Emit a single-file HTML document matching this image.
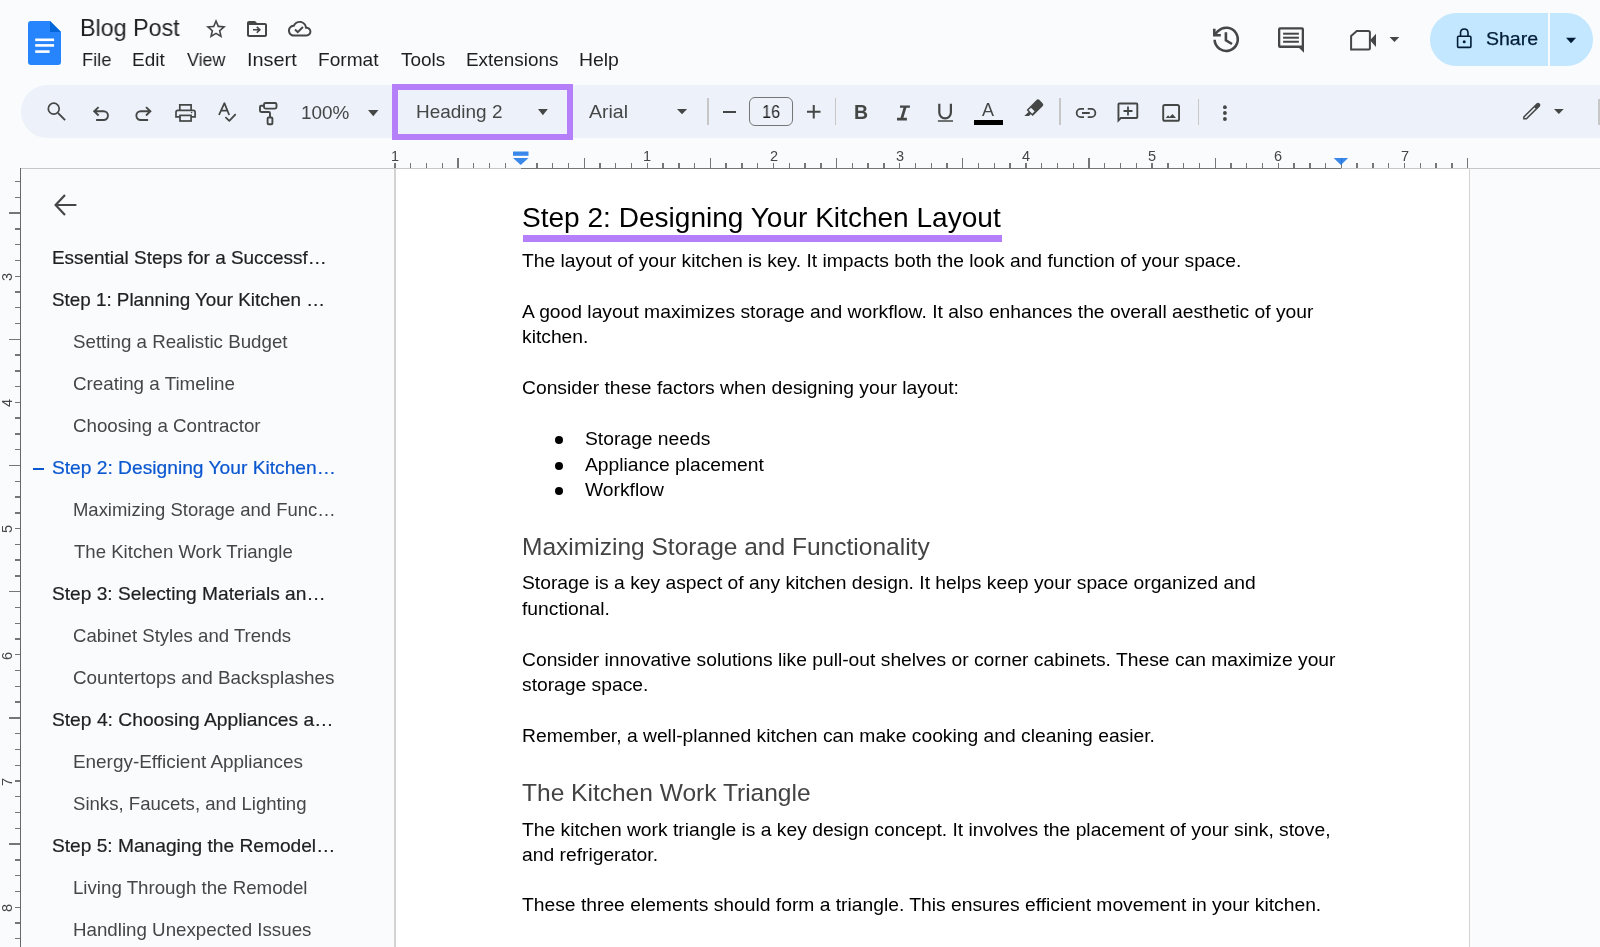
<!DOCTYPE html>
<html><head><meta charset="utf-8"><title>Blog Post - Google Docs</title>
<style>
html,body{margin:0;padding:0;}
body{width:1600px;height:947px;overflow:hidden;position:relative;background:#f9fbfd;font-family:"Liberation Sans",sans-serif;}
.t{position:absolute;white-space:nowrap;line-height:1;transform-origin:0 0;will-change:transform;}
.a{position:absolute;}
svg{position:absolute;overflow:visible;}
</style></head><body>

<svg style="left:28px;top:21px" width="33" height="44" viewBox="0 0 33 44">
<path d="M3 0H22L33 11V41Q33 44 30 44H3Q0 44 0 41V3Q0 0 3 0Z" fill="#2684fc"/>
<path d="M22 0L33 11H22Z" fill="#0066da"/>
<rect x="7.2" y="17.5" width="18.9" height="2.6" fill="#fff"/>
<rect x="7.2" y="23.1" width="18.9" height="2.6" fill="#fff"/>
<rect x="7.2" y="29.3" width="14.4" height="2.6" fill="#fff"/>
</svg>
<div class="t" style="left:79.76px;top:17.24px;font-size:23.70px;color:#1f1f1f;transform:scaleX(0.9827);transform-origin:2.20px 0;">Blog Post</div>
<svg style="left:203.5px;top:17px" width="24" height="24" viewBox="0 0 24 24"><path fill="#444746" d="M22 9.24l-7.19-.62L12 2 9.19 8.63 2 9.24l5.46 4.73L5.82 21 12 17.27 18.18 21l-1.63-7.03L22 9.24zM12 15.4l-3.76 2.27 1-4.28-3.32-2.88 4.38-.38L12 6.1l1.71 4.04 4.38.38-3.32 2.88 1 4.28L12 15.4z"/></svg>
<svg style="left:245.2px;top:17px" width="24" height="24" viewBox="0 0 24 24"><path fill="#444746" d="M20 6h-8l-2-2H4c-1.1 0-1.99.9-1.99 2L2 18c0 1.1.9 2 2 2h16c1.1 0 2-.9 2-2V8c0-1.1-.9-2-2-2zm0 12H4V8h16v10z"/><path fill="#444746" d="M12.84 12H8v1.6h4.84l-1.59 1.59L12.36 16.3 16 12.8 12.36 9.3l-1.11 1.11z"/></svg>
<svg style="left:288px;top:17.1px" width="23.4" height="23.4" viewBox="0 0 24 24"><path fill="#444746" d="M19.35 10.04C18.67 6.59 15.64 4 12 4 9.11 4 6.6 5.64 5.35 8.04 2.34 8.36 0 10.91 0 14c0 3.31 2.69 6 6 6h13c2.76 0 5-2.24 5-5 0-2.64-2.05-4.78-4.65-4.96zM19 18H6c-2.21 0-4-1.79-4-4 0-2.05 1.53-3.76 3.56-3.97l1.07-.11.5-.95C8.08 7.14 9.94 6 12 6c2.62 0 4.88 1.86 5.39 4.43l.3 1.5 1.53.11c1.56.1 2.78 1.41 2.78 2.96 0 1.65-1.35 3-3 3zm-9-3.82l-2.09-2.09L6.5 13.5 10 17l6.01-6.01-1.41-1.41z"/></svg>
<div class="t" style="left:82.10px;top:50.82px;font-size:18.40px;color:#1f1f1f;transform:scaleX(0.9893);transform-origin:0.70px 0;">File</div>
<div class="t" style="left:131.50px;top:50.82px;font-size:18.40px;color:#1f1f1f;transform:scaleX(1.0323);transform-origin:1.00px 0;">Edit</div>
<div class="t" style="left:186.50px;top:50.82px;font-size:18.40px;color:#1f1f1f;transform:scaleX(0.9688);transform-origin:0.50px 0;">View</div>
<div class="t" style="left:246.50px;top:50.82px;font-size:18.40px;color:#1f1f1f;transform:scaleX(1.0833);transform-origin:1.00px 0;">Insert</div>
<div class="t" style="left:318.00px;top:50.82px;font-size:18.40px;color:#1f1f1f;transform:scaleX(1.0395);transform-origin:0.75px 0;">Format</div>
<div class="t" style="left:401.00px;top:50.82px;font-size:18.40px;color:#1f1f1f;transform:scaleX(1.0298);transform-origin:0.25px 0;">Tools</div>
<div class="t" style="left:465.50px;top:50.82px;font-size:18.40px;color:#1f1f1f;transform:scaleX(1.0284);transform-origin:1.50px 0;">Extensions</div>
<div class="t" style="left:578.50px;top:50.82px;font-size:18.40px;color:#1f1f1f;transform:scaleX(1.0556);transform-origin:1.50px 0;">Help</div>
<svg style="left:1205px;top:20px" width="40" height="40" viewBox="0 0 40 40" fill="none" stroke="#444746" stroke-width="2.6">
<path d="M9.6 19.8A11.6 11.6 0 1 0 13 11.1"/><path d="M13.4 10.7L9.9 14.3"/><path d="M9.3 8.8V15.2H15.8"/><path d="M20.9 12.2V20.3L27 24"/></svg>
<svg style="left:1270px;top:20px" width="40" height="40" viewBox="0 0 40 40">
<path fill="#444746" fill-rule="evenodd" d="M8 9.2Q8 7.2 10 7.2H32Q34 7.2 34 9.2V32.8L29.1 27.9H10Q8 27.9 8 25.9ZM10.3 9.5V25.6H31.7V9.5Z"/>
<rect x="13.1" y="12.7" width="15.8" height="2" fill="#444746"/><rect x="13.1" y="16.7" width="15.8" height="2" fill="#444746"/><rect x="13.1" y="20.75" width="15.8" height="2" fill="#444746"/></svg>
<svg style="left:1345px;top:20px" width="60" height="40" viewBox="0 0 60 40">
<path d="M6.1 16L11.8 10.9H23.4Q24.9 10.9 24.9 12.4V28.1Q24.9 29.6 23.4 29.6H6.1Z" fill="none" stroke="#444746" stroke-width="2"/>
<path d="M25 20.3L31 13.8V27Z" fill="#444746"/>
<path d="M44.6 16.9H54.3L49.45 22Z" fill="#444746"/></svg>
<div class="a" style="left:1430px;top:13px;width:163px;height:52.5px;border-radius:26.25px;background:#c2e7ff"></div>
<div class="a" style="left:1548.4px;top:13px;width:1.5px;height:52.5px;background:#f9fbfd"></div>
<svg style="left:1450px;top:24px" width="30" height="28" viewBox="0 0 30 28" fill="none" stroke="#001d35" stroke-width="1.6"><path d="M10.55 12.2V8.6A3.73 3.73 0 0 1 18 8.6V12.2"/><rect x="7.6" y="12.2" width="13.3" height="11.2" rx="1"/><circle cx="14.2" cy="17.7" r="1.5" fill="#001d35" stroke="none"/></svg>
<div class="t" style="left:1486.30px;top:30.42px;font-size:18.40px;color:#001d35;transform:scaleX(1.0617);transform-origin:1.00px 0;-webkit-text-stroke:0.25px #001d35;">Share</div>
<svg style="left:1560px;top:30px" width="20" height="20" viewBox="0 0 20 20"><path d="M6 7.8H16.1L11.05 13.2Z" fill="#001d35"/></svg>
<div class="a" style="left:21px;top:85.3px;width:1650px;height:52.4px;border-radius:26.2px;background:#edf2fa"></div>
<svg style="left:42px;top:98px" width="32" height="28" viewBox="0 0 32 28" fill="none" stroke="#444746" stroke-width="1.7"><circle cx="11.75" cy="10.65" r="5.45"/><path d="M15.9 14.8L23.1 22.2" stroke-width="1.9"/></svg>
<svg style="left:88px;top:100px" width="68" height="26" viewBox="0 0 68 26" fill="none" stroke="#444746" stroke-width="1.9"><path d="M10.6 7.1L6.2 11.3L10.6 15.5M6.6 11.2H15.55A4.4 4.4 0 0 1 15.55 20H8.1"/><path d="M58 7.1L62.4 11.3L58 15.5M62 11.2H52.75A4.4 4.4 0 0 0 52.75 20H60.1"/></svg>
<svg style="left:170px;top:98px" width="32" height="28" viewBox="0 0 32 28" fill="none" stroke="#444746" stroke-width="1.7"><path d="M9.8 12.4V6.9H21.1V12.4"/><path d="M10 18.9H6V14.1Q6 12.3 7.8 12.3H23.3Q25.1 12.3 25.1 14.1V18.9H21.1"/><rect x="10" y="17.4" width="11.1" height="5.6"/><circle cx="21.6" cy="14.5" r="0.8" fill="#444746" stroke="none"/></svg>
<svg style="left:210px;top:95px" width="32" height="32" viewBox="0 0 32 32" fill="none" stroke="#444746" stroke-width="1.8" stroke-linejoin="round"><path d="M9 20L14.4 8.2L19.2 20M11.3 15.6H17.2"/><path d="M15.4 22.2L19.3 25.8L25.7 19.2"/></svg>
<svg style="left:210px;top:95px" width="72" height="32" viewBox="0 0 72 32" fill="none" stroke="#444746" stroke-width="1.9"><rect x="54" y="8" width="12.5" height="5.6" rx="1.5"/><path d="M54 10.8H51.2Q50 10.8 50 12V15.8Q50 17 51.2 17H58.8Q60 17 60 18.2V22.5"/><rect x="57.6" y="22.5" width="4.8" height="6.8" rx="1"/></svg>
<div class="t" style="left:301.25px;top:104.12px;font-size:18.40px;color:#444746;transform:scaleX(1.0272);transform-origin:1.50px 0;">100%</div>
<svg style="left:368px;top:110px" width="10.5" height="6.2" viewBox="0 0 10.5 6.2"><path d="M0 0H10.5L5.25 6.2Z" fill="#444746"/></svg>
<div class="t" style="left:416.30px;top:102.92px;font-size:18.40px;color:#444746;transform:scaleX(1.0317);transform-origin:1.50px 0;">Heading 2</div>
<svg style="left:538.2px;top:108.7px" width="9.8" height="6.2" viewBox="0 0 9.8 6.2"><path d="M0 0H9.8L4.9 6.2Z" fill="#444746"/></svg>
<div class="a" style="left:391.7px;top:83.5px;width:168.9px;height:44.8px;border:6px solid #b57ffa"></div>
<div class="t" style="left:589.30px;top:103.02px;font-size:18.40px;color:#444746;transform:scaleX(1.0611);transform-origin:0.50px 0;">Arial</div>
<svg style="left:677.2px;top:109.2px" width="10.1" height="5.2" viewBox="0 0 10.1 5.2"><path d="M0 0H10.1L5.05 5.2Z" fill="#444746"/></svg>
<div class="a" style="left:707.1px;top:98.1px;width:1.7px;height:26.7px;background:#c7c7c7"></div>
<div class="a" style="left:722.8px;top:110.8px;width:13.6px;height:2px;background:#444746"></div>
<div class="a" style="left:749.4px;top:96.5px;width:41.6px;height:27.3px;border:1.4px solid #747775;border-radius:6px"></div>
<div class="t" style="left:762.40px;top:103.42px;font-size:18.40px;color:#1f1f1f;transform:scaleX(0.8737);transform-origin:1.00px 0;">16</div>
<svg style="left:806.8px;top:105.4px" width="13.5" height="13.5" viewBox="0 0 13.5 13.5"><path d="M0 6.75H13.5M6.75 0V13.5" stroke="#444746" stroke-width="2"/></svg>
<div class="a" style="left:834.8px;top:98.1px;width:1.4px;height:26.7px;background:#c7c7c7"></div>
<div class="t" style="left:854px;top:103.2px;font-size:19.5px;font-weight:bold;color:#444746">B</div>
<svg style="left:890px;top:100px" width="25" height="25" viewBox="0 0 25 25" fill="#444746">
<path d="M10 5.4H19.9V7.8H16.4L13.4 17.8H16.9V20.5H7V17.8H10.5L13.5 7.8H10Z"/></svg>
<svg style="left:930px;top:100px" width="30" height="25" viewBox="0 0 30 25" fill="none" stroke="#444746" stroke-width="2.2">
<path d="M9.3 3.8V12.6A5.8 5.8 0 0 0 20.9 12.6V3.8"/><path d="M7.9 21H23" stroke-width="1.5"/></svg>
<div class="t" style="left:982px;top:101px;font-size:18px;color:#444746">A</div>
<div class="a" style="left:974px;top:119.6px;width:29.4px;height:5.4px;background:#000"></div>
<svg style="left:1020px;top:96px" width="28" height="24" viewBox="0 0 28 24">
<path d="M4.3 20.1L8.5 15.9L6.6 14L16.5 4.1Q18 2.6 19.5 4.1L22.6 7.2Q24.1 8.7 22.6 10.2L12.7 20.1L10.8 18.2L8.9 20.1Z" fill="#444746"/>
<path d="M8.6 14.1L11 11.7L14.6 15.3L12.2 17.7Z" fill="#edf2fa"/></svg>
<div class="a" style="left:1059.4px;top:98.1px;width:1.5px;height:26.7px;background:#c7c7c7"></div>
<svg style="left:1066px;top:98px" width="32" height="28" viewBox="0 0 32 28" fill="none" stroke="#444746" stroke-width="1.8"><path d="M18 10.9H14.75A4.1 4.1 0 0 0 14.75 19.1H18M21.75 10.9H25.25A4.1 4.1 0 0 1 25.25 19.1H21.75M16 15H23.75"/></svg>
<svg style="left:1066px;top:98px" width="80" height="28" viewBox="0 0 80 28" ><path fill="#444746" fill-rule="evenodd" d="M51.5 6.3Q51.5 4.5 53.3 4.5H70.45Q72.25 4.5 72.25 6.3V19.2Q72.25 21 70.45 21H55.2L51.5 24.8ZM53.4 6.4V20.2L54.4 19.1H70.35V6.4Z"/><path d="M62 8.5V17.5M57.5 13H66.5" stroke="#444746" stroke-width="1.8"/></svg>
<svg style="left:1155px;top:98px" width="32" height="28" viewBox="0 0 32 28" ><rect x="8.2" y="6.95" width="15.85" height="15.85" rx="1.6" fill="none" stroke="#444746" stroke-width="1.9"/><path d="M10.75 20L13.1 17.2L14.6 19L17.5 15.9L21 20Z" fill="#444746"/></svg>
<div class="a" style="left:1198px;top:99px;width:1.2px;height:25.75px;background:#c7c7c7"></div>
<svg style="left:1215px;top:98px" width="20" height="28" viewBox="0 0 20 28" fill="#444746"><circle cx="9.9" cy="9.15" r="1.9"/><circle cx="9.9" cy="15" r="1.9"/><circle cx="9.9" cy="21" r="1.9"/></svg>
<svg style="left:1515px;top:98px" width="32" height="28" viewBox="0 0 32 28" ><path fill="#444746" d="M8.1 21.6V18.7L21.4 5.4A2.3 2.3 0 0 1 24.65 8.65L11.7 21.6Z"/><path fill="#edf2fa" d="M9.6 20.1V19.3L19.45 9.45L20.6 10.6L11.1 20.1Z"/></svg>
<svg style="left:1554.3px;top:109px" width="9.7" height="5" viewBox="0 0 9.7 5"><path d="M0 0H9.7L4.85 5Z" fill="#444746"/></svg>
<div class="a" style="left:1597.5px;top:98.5px;width:3px;height:26px;background:#c7c7c7"></div>
<div class="a" style="left:20px;top:168px;width:1580px;height:1.2px;background:#c7c7c7"></div>
<div class="a" style="left:521px;top:167.9px;width:820px;height:1.6px;background:#737876"></div>
<div class="a" style="left:394.20px;top:162.80px;width:1.4px;height:5.2px;background:#737876"></div><div class="a" style="left:409.98px;top:162.80px;width:1.4px;height:5.2px;background:#737876"></div><div class="a" style="left:425.75px;top:162.80px;width:1.4px;height:5.2px;background:#737876"></div><div class="a" style="left:441.53px;top:162.80px;width:1.4px;height:5.2px;background:#737876"></div><div class="a" style="left:457.30px;top:158.00px;width:1.4px;height:10px;background:#737876"></div><div class="a" style="left:473.08px;top:162.80px;width:1.4px;height:5.2px;background:#737876"></div><div class="a" style="left:488.85px;top:162.80px;width:1.4px;height:5.2px;background:#737876"></div><div class="a" style="left:504.63px;top:162.80px;width:1.4px;height:5.2px;background:#737876"></div><div class="a" style="left:536.17px;top:162.80px;width:1.4px;height:5.2px;background:#737876"></div><div class="a" style="left:551.95px;top:162.80px;width:1.4px;height:5.2px;background:#737876"></div><div class="a" style="left:567.73px;top:162.80px;width:1.4px;height:5.2px;background:#737876"></div><div class="a" style="left:583.50px;top:158.00px;width:1.4px;height:10px;background:#737876"></div><div class="a" style="left:599.27px;top:162.80px;width:1.4px;height:5.2px;background:#737876"></div><div class="a" style="left:615.05px;top:162.80px;width:1.4px;height:5.2px;background:#737876"></div><div class="a" style="left:630.82px;top:162.80px;width:1.4px;height:5.2px;background:#737876"></div><div class="a" style="left:646.60px;top:162.80px;width:1.4px;height:5.2px;background:#737876"></div><div class="a" style="left:662.38px;top:162.80px;width:1.4px;height:5.2px;background:#737876"></div><div class="a" style="left:678.15px;top:162.80px;width:1.4px;height:5.2px;background:#737876"></div><div class="a" style="left:693.92px;top:162.80px;width:1.4px;height:5.2px;background:#737876"></div><div class="a" style="left:709.70px;top:158.00px;width:1.4px;height:10px;background:#737876"></div><div class="a" style="left:725.48px;top:162.80px;width:1.4px;height:5.2px;background:#737876"></div><div class="a" style="left:741.25px;top:162.80px;width:1.4px;height:5.2px;background:#737876"></div><div class="a" style="left:757.02px;top:162.80px;width:1.4px;height:5.2px;background:#737876"></div><div class="a" style="left:772.80px;top:162.80px;width:1.4px;height:5.2px;background:#737876"></div><div class="a" style="left:788.58px;top:162.80px;width:1.4px;height:5.2px;background:#737876"></div><div class="a" style="left:804.35px;top:162.80px;width:1.4px;height:5.2px;background:#737876"></div><div class="a" style="left:820.12px;top:162.80px;width:1.4px;height:5.2px;background:#737876"></div><div class="a" style="left:835.90px;top:158.00px;width:1.4px;height:10px;background:#737876"></div><div class="a" style="left:851.67px;top:162.80px;width:1.4px;height:5.2px;background:#737876"></div><div class="a" style="left:867.45px;top:162.80px;width:1.4px;height:5.2px;background:#737876"></div><div class="a" style="left:883.22px;top:162.80px;width:1.4px;height:5.2px;background:#737876"></div><div class="a" style="left:899.00px;top:162.80px;width:1.4px;height:5.2px;background:#737876"></div><div class="a" style="left:914.77px;top:162.80px;width:1.4px;height:5.2px;background:#737876"></div><div class="a" style="left:930.55px;top:162.80px;width:1.4px;height:5.2px;background:#737876"></div><div class="a" style="left:946.33px;top:162.80px;width:1.4px;height:5.2px;background:#737876"></div><div class="a" style="left:962.10px;top:158.00px;width:1.4px;height:10px;background:#737876"></div><div class="a" style="left:977.88px;top:162.80px;width:1.4px;height:5.2px;background:#737876"></div><div class="a" style="left:993.65px;top:162.80px;width:1.4px;height:5.2px;background:#737876"></div><div class="a" style="left:1009.42px;top:162.80px;width:1.4px;height:5.2px;background:#737876"></div><div class="a" style="left:1025.20px;top:162.80px;width:1.4px;height:5.2px;background:#737876"></div><div class="a" style="left:1040.98px;top:162.80px;width:1.4px;height:5.2px;background:#737876"></div><div class="a" style="left:1056.75px;top:162.80px;width:1.4px;height:5.2px;background:#737876"></div><div class="a" style="left:1072.52px;top:162.80px;width:1.4px;height:5.2px;background:#737876"></div><div class="a" style="left:1088.30px;top:158.00px;width:1.4px;height:10px;background:#737876"></div><div class="a" style="left:1104.08px;top:162.80px;width:1.4px;height:5.2px;background:#737876"></div><div class="a" style="left:1119.85px;top:162.80px;width:1.4px;height:5.2px;background:#737876"></div><div class="a" style="left:1135.62px;top:162.80px;width:1.4px;height:5.2px;background:#737876"></div><div class="a" style="left:1151.40px;top:162.80px;width:1.4px;height:5.2px;background:#737876"></div><div class="a" style="left:1167.17px;top:162.80px;width:1.4px;height:5.2px;background:#737876"></div><div class="a" style="left:1182.95px;top:162.80px;width:1.4px;height:5.2px;background:#737876"></div><div class="a" style="left:1198.73px;top:162.80px;width:1.4px;height:5.2px;background:#737876"></div><div class="a" style="left:1214.50px;top:158.00px;width:1.4px;height:10px;background:#737876"></div><div class="a" style="left:1230.27px;top:162.80px;width:1.4px;height:5.2px;background:#737876"></div><div class="a" style="left:1246.05px;top:162.80px;width:1.4px;height:5.2px;background:#737876"></div><div class="a" style="left:1261.83px;top:162.80px;width:1.4px;height:5.2px;background:#737876"></div><div class="a" style="left:1277.60px;top:162.80px;width:1.4px;height:5.2px;background:#737876"></div><div class="a" style="left:1293.38px;top:162.80px;width:1.4px;height:5.2px;background:#737876"></div><div class="a" style="left:1309.15px;top:162.80px;width:1.4px;height:5.2px;background:#737876"></div><div class="a" style="left:1324.92px;top:162.80px;width:1.4px;height:5.2px;background:#737876"></div><div class="a" style="left:1340.70px;top:158.00px;width:1.4px;height:10px;background:#737876"></div><div class="a" style="left:1356.48px;top:162.80px;width:1.4px;height:5.2px;background:#737876"></div><div class="a" style="left:1372.25px;top:162.80px;width:1.4px;height:5.2px;background:#737876"></div><div class="a" style="left:1388.02px;top:162.80px;width:1.4px;height:5.2px;background:#737876"></div><div class="a" style="left:1403.80px;top:162.80px;width:1.4px;height:5.2px;background:#737876"></div><div class="a" style="left:1419.58px;top:162.80px;width:1.4px;height:5.2px;background:#737876"></div><div class="a" style="left:1435.35px;top:162.80px;width:1.4px;height:5.2px;background:#737876"></div><div class="a" style="left:1451.12px;top:162.80px;width:1.4px;height:5.2px;background:#737876"></div><div class="a" style="left:1466.90px;top:158.00px;width:1.4px;height:10px;background:#737876"></div>
<div class="t" style="left:632.30px;top:148.5px;width:30px;text-align:center;font-size:14.5px;color:#444746">1</div>
<div class="t" style="left:758.50px;top:148.5px;width:30px;text-align:center;font-size:14.5px;color:#444746">2</div>
<div class="t" style="left:884.70px;top:148.5px;width:30px;text-align:center;font-size:14.5px;color:#444746">3</div>
<div class="t" style="left:1010.90px;top:148.5px;width:30px;text-align:center;font-size:14.5px;color:#444746">4</div>
<div class="t" style="left:1137.10px;top:148.5px;width:30px;text-align:center;font-size:14.5px;color:#444746">5</div>
<div class="t" style="left:1263.30px;top:148.5px;width:30px;text-align:center;font-size:14.5px;color:#444746">6</div>
<div class="t" style="left:1389.50px;top:148.5px;width:30px;text-align:center;font-size:14.5px;color:#444746">7</div>
<div class="t" style="left:379.90px;top:148.5px;width:30px;text-align:center;font-size:14.5px;color:#444746">1</div>
<svg style="left:511px;top:150px" width="20" height="17" viewBox="0 0 20 17"><rect x="2" y="1.5" width="15.5" height="4.3" fill="#1a73e8" opacity="0.85"/><path d="M2 8H17.5L9.75 15Z" fill="#1a73e8" opacity="0.85"/></svg>
<svg style="left:1331px;top:150px" width="20" height="17" viewBox="0 0 20 17"><path d="M2.7 8.1H17.1L9.9 15Z" fill="#1a73e8" opacity="0.85"/></svg>
<div class="a" style="left:19.5px;top:168px;width:1.5px;height:779px;background:#666a6d"></div>
<div class="a" style="left:14.50px;top:180.85px;width:5.5px;height:1.4px;background:#737876"></div><div class="a" style="left:14.50px;top:196.62px;width:5.5px;height:1.4px;background:#737876"></div><div class="a" style="left:9.00px;top:212.40px;width:11px;height:1.4px;background:#737876"></div><div class="a" style="left:14.50px;top:228.18px;width:5.5px;height:1.4px;background:#737876"></div><div class="a" style="left:14.50px;top:243.95px;width:5.5px;height:1.4px;background:#737876"></div><div class="a" style="left:14.50px;top:259.73px;width:5.5px;height:1.4px;background:#737876"></div><div class="a" style="left:14.50px;top:275.50px;width:5.5px;height:1.4px;background:#737876"></div><div class="a" style="left:14.50px;top:291.27px;width:5.5px;height:1.4px;background:#737876"></div><div class="a" style="left:14.50px;top:307.05px;width:5.5px;height:1.4px;background:#737876"></div><div class="a" style="left:14.50px;top:322.82px;width:5.5px;height:1.4px;background:#737876"></div><div class="a" style="left:9.00px;top:338.60px;width:11px;height:1.4px;background:#737876"></div><div class="a" style="left:14.50px;top:354.38px;width:5.5px;height:1.4px;background:#737876"></div><div class="a" style="left:14.50px;top:370.15px;width:5.5px;height:1.4px;background:#737876"></div><div class="a" style="left:14.50px;top:385.93px;width:5.5px;height:1.4px;background:#737876"></div><div class="a" style="left:14.50px;top:401.70px;width:5.5px;height:1.4px;background:#737876"></div><div class="a" style="left:14.50px;top:417.47px;width:5.5px;height:1.4px;background:#737876"></div><div class="a" style="left:14.50px;top:433.25px;width:5.5px;height:1.4px;background:#737876"></div><div class="a" style="left:14.50px;top:449.03px;width:5.5px;height:1.4px;background:#737876"></div><div class="a" style="left:9.00px;top:464.80px;width:11px;height:1.4px;background:#737876"></div><div class="a" style="left:14.50px;top:480.57px;width:5.5px;height:1.4px;background:#737876"></div><div class="a" style="left:14.50px;top:496.35px;width:5.5px;height:1.4px;background:#737876"></div><div class="a" style="left:14.50px;top:512.12px;width:5.5px;height:1.4px;background:#737876"></div><div class="a" style="left:14.50px;top:527.90px;width:5.5px;height:1.4px;background:#737876"></div><div class="a" style="left:14.50px;top:543.67px;width:5.5px;height:1.4px;background:#737876"></div><div class="a" style="left:14.50px;top:559.45px;width:5.5px;height:1.4px;background:#737876"></div><div class="a" style="left:14.50px;top:575.22px;width:5.5px;height:1.4px;background:#737876"></div><div class="a" style="left:9.00px;top:591.00px;width:11px;height:1.4px;background:#737876"></div><div class="a" style="left:14.50px;top:606.77px;width:5.5px;height:1.4px;background:#737876"></div><div class="a" style="left:14.50px;top:622.55px;width:5.5px;height:1.4px;background:#737876"></div><div class="a" style="left:14.50px;top:638.32px;width:5.5px;height:1.4px;background:#737876"></div><div class="a" style="left:14.50px;top:654.10px;width:5.5px;height:1.4px;background:#737876"></div><div class="a" style="left:14.50px;top:669.88px;width:5.5px;height:1.4px;background:#737876"></div><div class="a" style="left:14.50px;top:685.65px;width:5.5px;height:1.4px;background:#737876"></div><div class="a" style="left:14.50px;top:701.42px;width:5.5px;height:1.4px;background:#737876"></div><div class="a" style="left:9.00px;top:717.20px;width:11px;height:1.4px;background:#737876"></div><div class="a" style="left:14.50px;top:732.97px;width:5.5px;height:1.4px;background:#737876"></div><div class="a" style="left:14.50px;top:748.75px;width:5.5px;height:1.4px;background:#737876"></div><div class="a" style="left:14.50px;top:764.52px;width:5.5px;height:1.4px;background:#737876"></div><div class="a" style="left:14.50px;top:780.30px;width:5.5px;height:1.4px;background:#737876"></div><div class="a" style="left:14.50px;top:796.08px;width:5.5px;height:1.4px;background:#737876"></div><div class="a" style="left:14.50px;top:811.85px;width:5.5px;height:1.4px;background:#737876"></div><div class="a" style="left:14.50px;top:827.62px;width:5.5px;height:1.4px;background:#737876"></div><div class="a" style="left:9.00px;top:843.40px;width:11px;height:1.4px;background:#737876"></div><div class="a" style="left:14.50px;top:859.17px;width:5.5px;height:1.4px;background:#737876"></div><div class="a" style="left:14.50px;top:874.95px;width:5.5px;height:1.4px;background:#737876"></div><div class="a" style="left:14.50px;top:890.72px;width:5.5px;height:1.4px;background:#737876"></div><div class="a" style="left:14.50px;top:906.50px;width:5.5px;height:1.4px;background:#737876"></div><div class="a" style="left:14.50px;top:922.27px;width:5.5px;height:1.4px;background:#737876"></div><div class="a" style="left:14.50px;top:938.05px;width:5.5px;height:1.4px;background:#737876"></div>
<div class="t" style="left:-8px;top:270.00px;width:30px;height:14px;text-align:center;font-size:14.5px;color:#444746;transform:rotate(-90deg);transform-origin:15px 7px">3</div>
<div class="t" style="left:-8px;top:396.20px;width:30px;height:14px;text-align:center;font-size:14.5px;color:#444746;transform:rotate(-90deg);transform-origin:15px 7px">4</div>
<div class="t" style="left:-8px;top:522.40px;width:30px;height:14px;text-align:center;font-size:14.5px;color:#444746;transform:rotate(-90deg);transform-origin:15px 7px">5</div>
<div class="t" style="left:-8px;top:648.60px;width:30px;height:14px;text-align:center;font-size:14.5px;color:#444746;transform:rotate(-90deg);transform-origin:15px 7px">6</div>
<div class="t" style="left:-8px;top:774.80px;width:30px;height:14px;text-align:center;font-size:14.5px;color:#444746;transform:rotate(-90deg);transform-origin:15px 7px">7</div>
<div class="t" style="left:-8px;top:901.00px;width:30px;height:14px;text-align:center;font-size:14.5px;color:#444746;transform:rotate(-90deg);transform-origin:15px 7px">8</div>
<div class="a" style="left:394px;top:169px;width:1076px;height:800px;background:#fff;border-left:2px solid #d3d3d3;border-right:1.5px solid #d3d3d3;box-sizing:border-box"></div>
<svg style="left:50px;top:190px" width="32" height="30" viewBox="0 0 32 30" fill="none" stroke="#444746" stroke-width="2.2">
<path d="M26.4 15H7.4M15 5L5.6 15L15 25"/></svg>
<div class="t ol" style="left:52.20px;top:249.42px;font-size:18.40px;color:#1f1f1f;transform:scaleX(1.0299);transform-origin:1.50px 0;-webkit-text-stroke:0.2px #1f1f1f;">Essential Steps for a Successf…</div>
<div class="t ol" style="left:52.20px;top:291.42px;font-size:18.40px;color:#1f1f1f;transform:scaleX(1.0235);transform-origin:1.50px 0;-webkit-text-stroke:0.2px #1f1f1f;">Step 1: Planning Your Kitchen …</div>
<div class="t ol" style="left:73.10px;top:333.42px;font-size:18.40px;color:#444746;transform:scaleX(1.0190);transform-origin:1.50px 0;">Setting a Realistic Budget</div>
<div class="t ol" style="left:73.10px;top:375.42px;font-size:18.40px;color:#444746;transform:scaleX(1.0229);transform-origin:1.50px 0;">Creating a Timeline</div>
<div class="t ol" style="left:73.10px;top:417.42px;font-size:18.40px;color:#444746;transform:scaleX(1.0197);transform-origin:1.50px 0;">Choosing a Contractor</div>
<div class="t ol" style="left:52.20px;top:459.42px;font-size:18.40px;color:#0b57d0;transform:scaleX(1.0442);transform-origin:1.50px 0;-webkit-text-stroke:0.2px #0b57d0;">Step 2: Designing Your Kitchen…</div>
<div class="a" style="left:33px;top:467.6px;width:11px;height:2.4px;background:#0b57d0"></div>
<div class="t ol" style="left:73.10px;top:501.42px;font-size:18.40px;color:#444746;transform:scaleX(1.0039);transform-origin:1.50px 0;">Maximizing Storage and Func…</div>
<div class="t ol" style="left:74.10px;top:543.42px;font-size:18.40px;color:#444746;transform:scaleX(1.0111);transform-origin:0.50px 0;">The Kitchen Work Triangle</div>
<div class="t ol" style="left:52.20px;top:585.42px;font-size:18.40px;color:#1f1f1f;transform:scaleX(1.0415);transform-origin:1.50px 0;-webkit-text-stroke:0.2px #1f1f1f;">Step 3: Selecting Materials an…</div>
<div class="t ol" style="left:73.10px;top:627.42px;font-size:18.40px;color:#444746;transform:scaleX(1.0112);transform-origin:1.50px 0;">Cabinet Styles and Trends</div>
<div class="t ol" style="left:73.10px;top:669.42px;font-size:18.40px;color:#444746;transform:scaleX(1.0277);transform-origin:1.50px 0;">Countertops and Backsplashes</div>
<div class="t ol" style="left:52.20px;top:711.42px;font-size:18.40px;color:#1f1f1f;transform:scaleX(1.0470);transform-origin:1.50px 0;-webkit-text-stroke:0.2px #1f1f1f;">Step 4: Choosing Appliances a…</div>
<div class="t ol" style="left:73.10px;top:753.42px;font-size:18.40px;color:#444746;transform:scaleX(1.0288);transform-origin:1.50px 0;">Energy-Efficient Appliances</div>
<div class="t ol" style="left:73.10px;top:795.42px;font-size:18.40px;color:#444746;transform:scaleX(1.0109);transform-origin:1.50px 0;">Sinks, Faucets, and Lighting</div>
<div class="t ol" style="left:52.20px;top:837.42px;font-size:18.40px;color:#1f1f1f;transform:scaleX(1.0420);transform-origin:1.50px 0;-webkit-text-stroke:0.2px #1f1f1f;">Step 5: Managing the Remodel…</div>
<div class="t ol" style="left:73.10px;top:879.42px;font-size:18.40px;color:#444746;transform:scaleX(1.0166);transform-origin:1.50px 0;">Living Through the Remodel</div>
<div class="t ol" style="left:73.10px;top:921.42px;font-size:18.40px;color:#444746;transform:scaleX(1.0185);transform-origin:1.50px 0;">Handling Unexpected Issues</div>
<div class="t" style="left:521.50px;top:204.46px;font-size:28.05px;color:#000;">Step 2: Designing Your Kitchen Layout</div>
<div class="t" style="left:522.40px;top:251.08px;font-size:19.28px;color:#000;">The layout of your kitchen is key. It impacts both the look and function of your space.</div>
<div class="t" style="left:522.40px;top:301.88px;font-size:19.28px;color:#000;">A good layout maximizes storage and workflow. It also enhances the overall aesthetic of your</div>
<div class="t" style="left:522.40px;top:327.38px;font-size:19.28px;color:#000;">kitchen.</div>
<div class="t" style="left:522.40px;top:377.98px;font-size:19.28px;color:#000;">Consider these factors when designing your layout:</div>
<div class="t" style="left:585.40px;top:429.38px;font-size:19.28px;color:#000;">Storage needs</div>
<div class="t" style="left:585.40px;top:454.88px;font-size:19.28px;color:#000;">Appliance placement</div>
<div class="t" style="left:585.40px;top:480.38px;font-size:19.28px;color:#000;">Workflow</div>
<div class="t" style="left:521.50px;top:535.03px;font-size:24.54px;color:#434343;">Maximizing Storage and Functionality</div>
<div class="t" style="left:522.40px;top:573.08px;font-size:19.28px;color:#000;">Storage is a key aspect of any kitchen design. It helps keep your space organized and</div>
<div class="t" style="left:522.40px;top:599.08px;font-size:19.28px;color:#000;">functional.</div>
<div class="t" style="left:522.40px;top:649.78px;font-size:19.28px;color:#000;">Consider innovative solutions like pull-out shelves or corner cabinets. These can maximize your</div>
<div class="t" style="left:522.40px;top:675.08px;font-size:19.28px;color:#000;">storage space.</div>
<div class="t" style="left:522.40px;top:725.68px;font-size:19.28px;color:#000;">Remember, a well-planned kitchen can make cooking and cleaning easier.</div>
<div class="t" style="left:521.50px;top:781.23px;font-size:24.54px;color:#434343;">The Kitchen Work Triangle</div>
<div class="t" style="left:522.40px;top:819.98px;font-size:19.28px;color:#000;">The kitchen work triangle is a key design concept. It involves the placement of your sink, stove,</div>
<div class="t" style="left:522.40px;top:844.88px;font-size:19.28px;color:#000;">and refrigerator.</div>
<div class="t" style="left:522.40px;top:895.28px;font-size:19.28px;color:#000;">These three elements should form a triangle. This ensures efficient movement in your kitchen.</div>
<div class="a" style="left:555.4px;top:436.20px;width:8px;height:8px;border-radius:50%;background:#000"></div>
<div class="a" style="left:555.4px;top:461.70px;width:8px;height:8px;border-radius:50%;background:#000"></div>
<div class="a" style="left:555.4px;top:487.20px;width:8px;height:8px;border-radius:50%;background:#000"></div>
<div class="a" style="left:522.5px;top:235.3px;width:479.5px;height:6.5px;background:#b57ffa"></div>
</body></html>
